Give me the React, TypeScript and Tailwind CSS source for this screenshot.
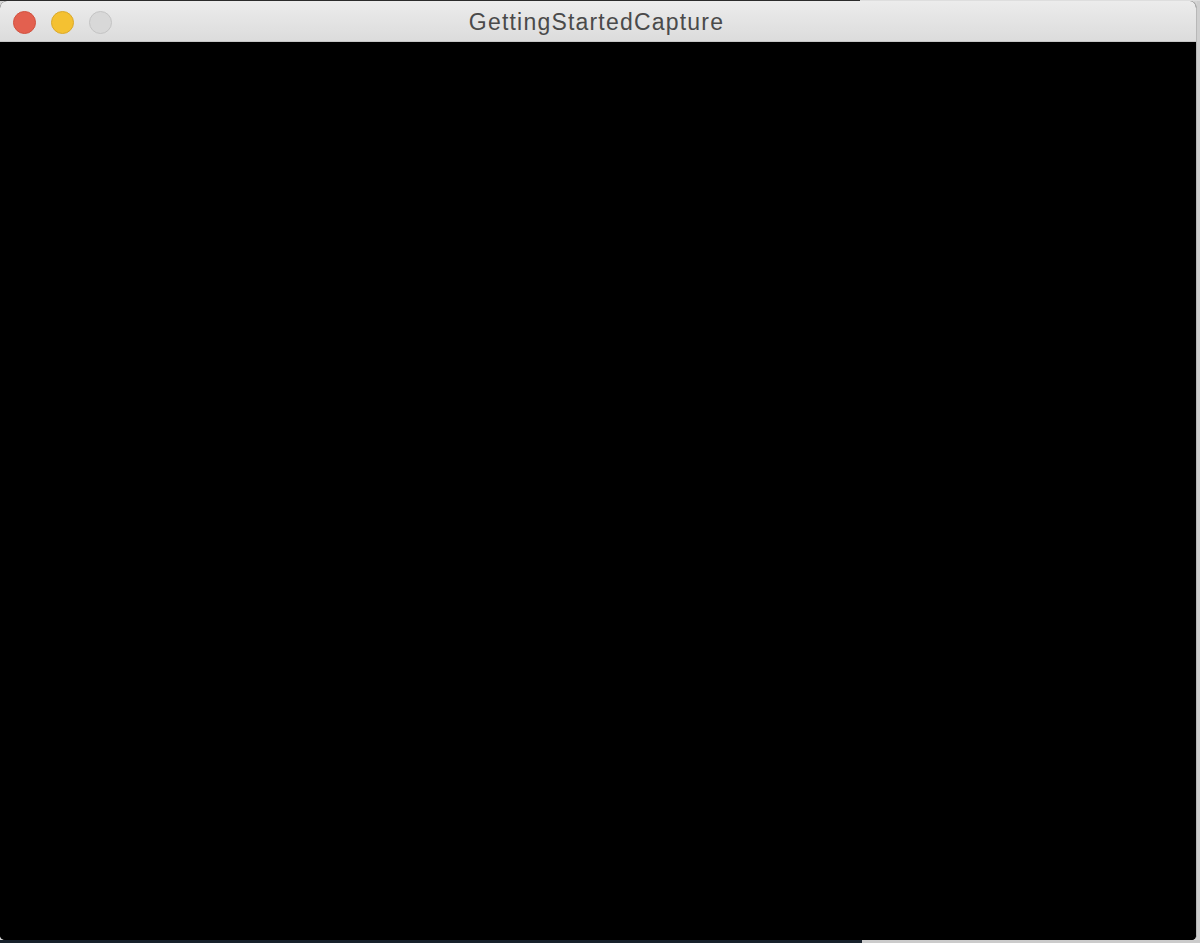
export default function App() {
  return (
    <div className="flex h-[943px] w-[1200px] flex-col overflow-hidden bg-[#d4d4d4]">
      {/* desktop behind the window, top edge */}
      <div className="flex h-px shrink-0">
        <div className="w-[860px] bg-[#2b2b2b]" />
        <div className="flex-1 bg-[#dedede]" />
      </div>

      <div className="flex min-h-0 flex-1">
        {/* window */}
        <div className="flex w-[1197px] flex-col overflow-hidden rounded-t-[7px] rounded-b-[5px] border-r border-[#b8b8b8] bg-black">
          <div className="relative flex h-[41px] shrink-0 items-center border-b border-[#c6c6c6] bg-gradient-to-b from-[#ececec] to-[#dcdcdc]">
            <div className="flex items-center gap-[15px] pl-[13px] pt-[2px]">
              <span className="h-[23px] w-[23px] rounded-full border border-[#d1513f] bg-[#e3604f]" />
              <span className="h-[23px] w-[23px] rounded-full border border-[#dba92a] bg-[#f4c132]" />
              <span className="h-[23px] w-[23px] rounded-full border border-[#c4c4c4] bg-[#d8d8d8]" />
            </div>
            <div className="absolute inset-0 flex items-center justify-center pt-[3px] pr-[3px] font-['Liberation_Sans',Arial,sans-serif] text-[23px] tracking-[1.2px] text-[#4a4a4a]">
              GettingStartedCapture
            </div>
          </div>
          <div className="flex-1 bg-black" />
        </div>
        {/* sliver of the desktop on the right */}
        <div className="flex-1 bg-[#cfcfcf]" />
      </div>

      {/* desktop behind the window, bottom edge */}
      <div className="flex h-[3px] shrink-0">
        <div className="w-[862px] bg-[#17212b]" />
        <div className="flex-1 bg-[#cbcbcb]" />
      </div>
    </div>
  );
}
